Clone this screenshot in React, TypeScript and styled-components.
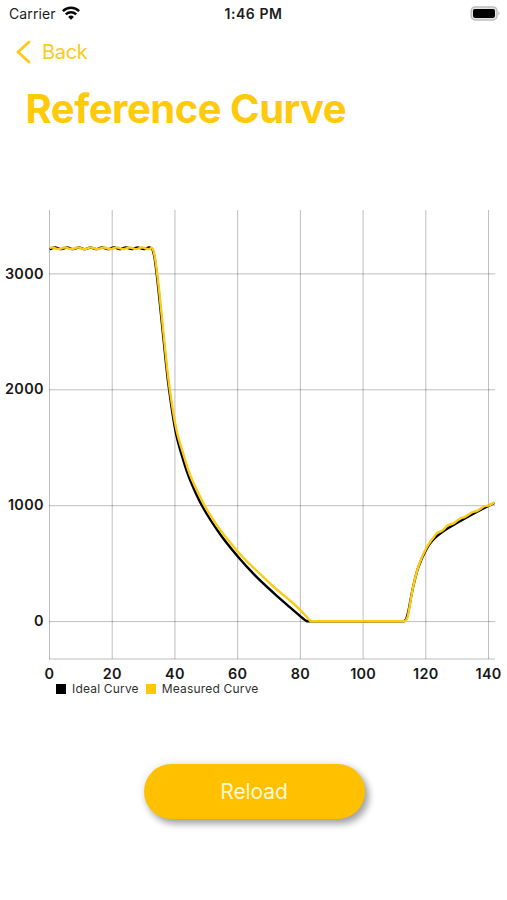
import React from "react";
import styled, { createGlobalStyle } from "styled-components";

const GlobalStyle = createGlobalStyle`
  *, *::before, *::after { box-sizing: border-box; }
  body { margin: 0; background: #fff; font-family: Inter, "Liberation Sans", sans-serif; }
`;

const Screen = styled.main`
  width: 507px;
  height: 900px;
  display: flex;
  flex-direction: column;
  background: #fff;
  overflow: hidden;
`;

const StatusBar = styled.header`
  display: grid;
  grid-template-columns: 1fr auto 1fr;
  align-items: center;
  height: 28px;
  padding: 0 6px 2px 9px;
  color: #1c1c1c;
  font-size: 14px;
`;

const Carrier = styled.div`
  display: flex;
  align-items: center;
  gap: 6px;
  letter-spacing: 0.1px;
`;

const Clock = styled.div`
  margin-left: -3px;
  font-size: 14px;
  font-weight: 600;
  letter-spacing: 0.55px;
`;

const BatterySlot = styled.div`
  display: flex;
  justify-content: flex-end;
`;

const BackButton = styled.button`
  display: flex;
  align-items: center;
  align-self: flex-start;
  gap: 11px;
  height: 48px;
  padding: 0 0 0 16px;
  border: 0;
  background: none;
  color: #ffc91a;
  font-family: inherit;
  font-size: 20px;
  letter-spacing: -0.3px;
`;

const Title = styled.h1`
  height: 66px;
  margin: 0 0 0 25.5px;
  color: #ffc90c;
  font-size: 40px;
  font-weight: 700;
  line-height: 66px;
  letter-spacing: -0.48px;
  white-space: nowrap;
`;

const ChartPanel = styled.section`
  height: 540px;
  padding-top: 58px;
`;

const Plot = styled.svg`
  display: block;
  width: 507px;
  height: 482px;
`;

const TickLabel = styled.text`
  fill: #171717;
  font-family: Inter, "Liberation Sans", sans-serif;
  font-size: 14.4px;
  font-weight: 600;
  letter-spacing: 0.28px;
`;

const Legend = styled.div`
  display: flex;
  align-items: center;
  gap: 7px;
  height: 16px;
  margin-top: -1px;
  padding-left: 56px;
`;

const LegendItem = styled.div`
  display: flex;
  align-items: center;
  gap: 6px;
  color: #303030;
  font-size: 12px;
  line-height: 14px;
  letter-spacing: 0.18px;
`;

const Swatch = styled.span<{ $color: string }>`
  width: 10px;
  height: 10px;
  background: ${({ $color }) => $color};
`;

const Footer = styled.footer`
  display: flex;
  justify-content: center;
  padding: 82px 0 0 1px;
`;

const ReloadButton = styled.button`
  width: 221px;
  height: 55px;
  padding: 0;
  border: 0;
  border-radius: 28px;
  background: #ffc000;
  box-shadow: 4px 5px 7px rgba(0, 0, 0, 0.33), 0 0 10px rgba(0, 0, 0, 0.12);
  color: #fff7d0;
  font-family: inherit;
  font-size: 21px;
  letter-spacing: -0.1px;
`;

const xTicks = [0, 20, 40, 60, 80, 100, 120, 140];
const yTicks = [0, 1000, 2000, 3000];
const toX = (v: number) => 49.5 + v * 3.136;
const toY = (v: number) => 621.6 - v * 0.1159;

type Point = [number, number];

// Catmull-Rom spline through the samples, as cubic segments.
const spline = (pts: Point[]) =>
  pts.slice(1).reduce((d, p, i) => {
    const a = pts[i];
    const before = pts[i - 1] ?? a;
    const after = pts[i + 2] ?? p;
    const c1 = [a[0] + (p[0] - before[0]) / 6, a[1] + (p[1] - before[1]) / 6];
    const c2 = [p[0] - (after[0] - a[0]) / 6, p[1] - (after[1] - a[1]) / 6];
    return `${d} C${c1.join(" ")} ${c2.join(" ")} ${p.join(" ")}`;
  }, `${pts[0][0]} ${pts[0][1]}`);

// Ripple of the flat stretch, counted back from its right end.
const plateau = (period: number, phase: number): Point[] =>
  Array.from({ length: 51 }, (_, i) => {
    const x = 49.5 + i * 2;
    return [x, 248.3 + 0.85 * Math.sin(((x - 149.5) / period) * 2 * Math.PI + phase)];
  });

const idealFall: Point[] = [
  [152.5, 249.5], [154.9, 260], [158.4, 289], [163.4, 338], [168.5, 385], [175.5, 431],
  [182.9, 459], [189.3, 478], [201.6, 505], [220, 534], [238.2, 557], [255, 575.3],
  [273.5, 592.8], [290, 607.3], [303, 618.5], [307, 621.3],
];
const measuredFall: Point[] = [
  [152.5, 248.5], [155.2, 259], [159, 289], [164, 338], [169.2, 385], [176.3, 429],
  [184, 456], [190.5, 476], [203.8, 504], [213, 519.5], [221, 531], [229, 541],
  [238.3, 552.2], [247.5, 562], [257, 571], [266, 579.5], [275, 588], [285, 596.3],
  [295, 605], [304, 614], [310.5, 621.3],
];
const idealRise: Point[] = [
  [403.5, 621.3], [406.2, 619], [408.6, 610], [413.1, 587], [418.4, 567], [426, 550],
  [432, 541], [437, 536], [446.7, 529], [460, 521.2], [476.7, 512], [486.7, 506.8], [494.5, 503],
];
const measuredRise: Point[] = [
  [404.5, 621.3], [407.1, 618.5], [409, 610], [413.3, 586], [418.6, 566], [425.8, 549],
  [430.5, 541.5], [433.5, 537.5], [437, 533], [441.5, 531], [444.5, 528.5], [448, 525],
  [453, 523.6], [457, 520.8], [460.5, 518.3], [465, 517], [469, 514.3], [472.5, 512.2],
  [477, 510.8], [481, 508.4], [484.5, 506.2], [489, 505.4], [494.5, 502.2],
];

const curve = (top: Point[], fall: Point[], rise: Point[]) =>
  `M${spline([...top, ...fall])} L${spline(rise)}`;

const idealPath = curve(plateau(11.8, 4.7), idealFall, idealRise);
const measuredPath = curve(plateau(12.9, 1.9), measuredFall, measuredRise);

function WifiIcon() {
  return (
    <svg width="18" height="14" viewBox="0 0 18 14" fill="none" stroke="#090909" strokeWidth="2.5">
      <path d="M.9 5.1a11.6 11.6 0 0 1 16.2 0" />
      <path d="M3.8 8.4a7.5 7.5 0 0 1 10.4 0" />
      <path d="M9 13.8 6.1 10.9a4.1 4.1 0 0 1 5.8 0Z" fill="#090909" stroke="none" />
    </svg>
  );
}

function BatteryIcon() {
  return (
    <svg width="31" height="15" viewBox="0 0 31 15">
      <rect x="1.2" y=".9" width="25.8" height="13" rx="4" fill="#e4e4e4" stroke="#bdbdbd" strokeWidth="1.5" />
      <rect x="3" y="2.9" width="22" height="9" rx="1.8" fill="#000" />
      <path d="M28.5 5.3q2.2 2.1 0 4.2Z" fill="#aaa" />
    </svg>
  );
}

function CurveChart() {
  return (
    <Plot viewBox="0 200 507 482">
      <g stroke="#000" strokeOpacity=".26">
        {xTicks.map((v) => <line key={v} x1={toX(v)} x2={toX(v)} y1="210" y2="659" />)}
        {yTicks.map((v) => <line key={v} x1="49" x2="495" y1={toY(v)} y2={toY(v)} />)}
        <line x1="49" x2="495" y1="659" y2="659" />
      </g>
      <g fill="none" strokeWidth="2.4" strokeLinejoin="round">
        <path d={idealPath} stroke="#000" />
        <path d={measuredPath} stroke="#fbcb16" />
      </g>
      {yTicks.map((v) => <TickLabel key={v} x="43.7" y={toY(v) + 4.6} textAnchor="end">{v}</TickLabel>)}
      {xTicks.map((v) => <TickLabel key={v} x={toX(v)} y="678.5" textAnchor="middle">{v}</TickLabel>)}
    </Plot>
  );
}

export default function App() {
  return (
    <Screen>
      <GlobalStyle />
      <StatusBar>
        <Carrier>Carrier <WifiIcon /></Carrier>
        <Clock>1:46 PM</Clock>
        <BatterySlot><BatteryIcon /></BatterySlot>
      </StatusBar>
      <BackButton>
        <svg width="15" height="24" viewBox="0 0 15 24" fill="none" stroke="currentColor" strokeWidth="2.8" strokeLinecap="round" strokeLinejoin="round">
          <path d="M13 2 2 12l11 10" />
        </svg>
        Back
      </BackButton>
      <Title>Reference Curve</Title>
      <ChartPanel>
        <CurveChart />
        <Legend>
          <LegendItem><Swatch $color="#000" />Ideal Curve</LegendItem>
          <LegendItem><Swatch $color="#ffca00" />Measured Curve</LegendItem>
        </Legend>
      </ChartPanel>
      <Footer><ReloadButton>Reload</ReloadButton></Footer>
    </Screen>
  );
}
